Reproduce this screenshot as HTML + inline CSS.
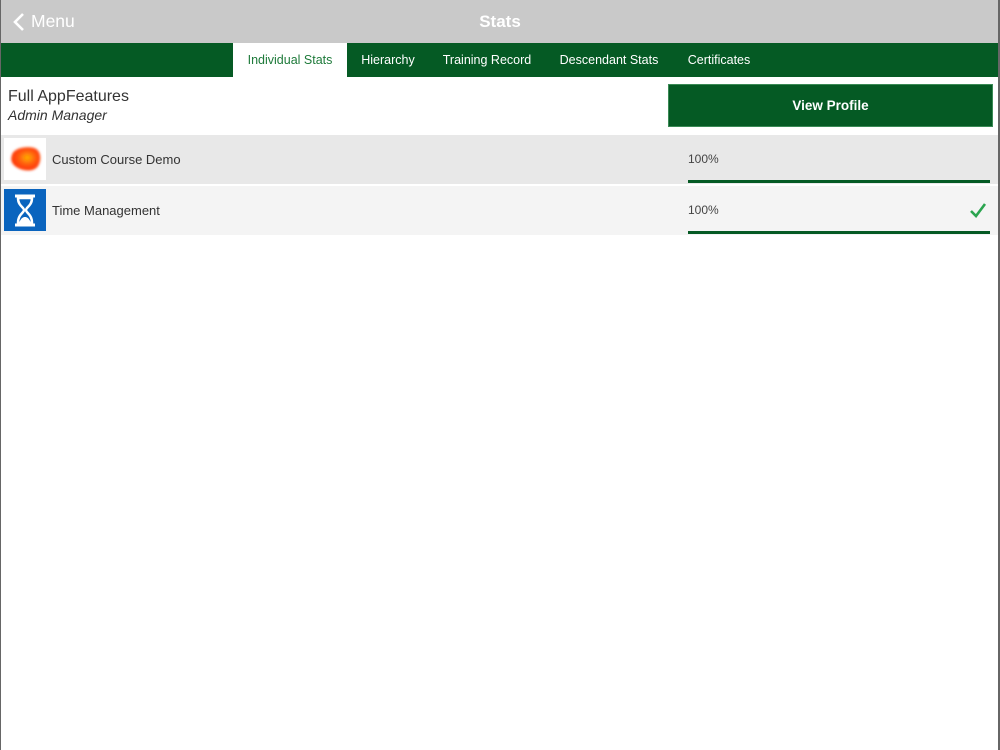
<!DOCTYPE html>
<html><head><meta charset="utf-8"><style>
*{margin:0;padding:0;box-sizing:border-box}
body{width:1000px;height:750px;background:#fff;font-family:"Liberation Sans",sans-serif;position:relative;overflow:hidden}
.top{position:absolute;left:0;top:0;width:1000px;height:43px;background:#c9c9c9}
.menu{position:absolute;top:11px;color:#fff;font-size:17.5px}
.title{position:absolute;left:0;width:1000px;top:12px;text-align:center;color:#fff;font-size:17px;font-weight:bold}
.tabs{position:absolute;left:0;top:43px;width:1000px;height:34px;background:#055a24}
.tab{position:absolute;top:0;height:34px;line-height:34px;color:#fff;font-size:12.5px;text-align:center}
.tab.act{background:#fff;color:#1e7a3a}
.name{position:absolute;left:8px;top:88px;font-size:16px;color:#333}
.role{position:absolute;left:8px;top:107px;font-size:14px;color:#333;font-style:italic}
.btn{position:absolute;left:668px;top:84px;width:325px;height:43px;background:#055a24;border:1px solid #3a8a55;color:#fff;font-weight:bold;font-size:13.5px;text-align:center;line-height:41px}
.row{position:absolute;left:1px;width:997px;height:49px}
.row .lbl{position:absolute;left:51px;top:17px;font-size:13px;color:#333}
.row .pct{position:absolute;left:687px;top:17px;font-size:12px;color:#444}
.row .bar{position:absolute;left:687px;top:45px;width:302px;height:3px;background:#055a24}
.ic{position:absolute;left:3px;top:3px;width:42px;height:42px}
</style></head><body>
<div class="top">
<svg style="position:absolute;left:12px;top:12px" width="14" height="20" viewBox="0 0 14 20"><path d="M11 2L3 10l8 8" stroke="#fff" stroke-width="2.6" fill="none"/></svg>
<div class="menu" style="left:31px">Menu</div>
<div class="title">Stats</div>
</div>
<div class="tabs">
<div class="tab act" style="left:233px;width:114px">Individual Stats</div>
<div class="tab" style="left:347px;width:82px">Hierarchy</div>
<div class="tab" style="left:429px;width:116px">Training Record</div>
<div class="tab" style="left:545px;width:128px">Descendant Stats</div>
<div class="tab" style="left:673px;width:92px">Certificates</div>
</div>
<div class="name">Full AppFeatures</div>
<div class="role">Admin Manager</div>
<div class="btn">View Profile</div>
<div class="row" style="top:135px;background:#e8e8e8">
<div class="ic" style="background:#fff"><svg width="42" height="42"><defs><radialGradient id="g" cx="0.55" cy="0.45" r="0.6"><stop offset="0" stop-color="#ffb000"/><stop offset="0.5" stop-color="#ff5a10"/><stop offset="1" stop-color="#ff2a00"/></radialGradient><filter id="b"><feGaussianBlur stdDeviation="1.2"/></filter></defs><path d="M8 17C10 10 22 8 30 10C37 12 38 22 34 28C30 34 20 33 14 30C8 27 6 22 8 17Z" fill="url(#g)" filter="url(#b)"/></svg></div>
<div class="lbl">Custom Course Demo</div><div class="pct">100%</div><div class="bar"></div></div>
<div class="row" style="top:186px;background:#f4f4f4">
<div class="ic" style="background:#0a64be"><svg width="42" height="42"><path d="M11 7h20M11 36h20" stroke="#fff" stroke-width="3"/><path d="M14 9c0 8 6 9 6 12s-6 4-6 13h14c0-9-6-10-6-13s6-4 6-12z" fill="none" stroke="#fff" stroke-width="2.5"/><path d="M15 34c2-5 4-6 6-6s4 1 6 6z" fill="#fff"/></svg></div>
<div class="lbl">Time Management</div><div class="pct">100%</div><div class="bar"></div>
<svg style="position:absolute;left:968px;top:15px" width="18" height="18"><path d="M2 10l5 5L16 3" stroke="#2aa44f" stroke-width="2.6" fill="none"/></svg>
</div>
<div style="position:absolute;left:0;top:0;width:1px;height:750px;background:#666"></div>
<div style="position:absolute;right:0;top:0;width:2px;height:750px;background:#666"></div>
</body></html>
